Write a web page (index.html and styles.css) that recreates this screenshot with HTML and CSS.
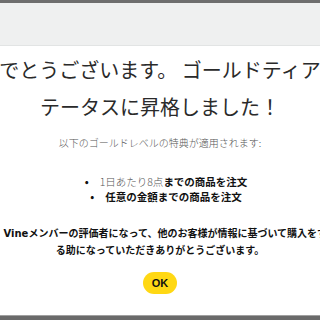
FILE: index.html
```html
<!DOCTYPE html>
<html lang="ja">
<head>
<meta charset="utf-8">
<link rel="stylesheet" href="styles.css">
</head>
<body>
<div class="frame">
  <div class="topbar"></div>
  <div class="header"></div>
  <main class="content">
    <h1 class="title">
      <span class="line">おめでとうございます。 ゴールドティアのス</span>
      <span class="line">テータスに昇格しました！</span>
    </h1>
    <p class="subtitle">以下のゴールドレベルの特典が適用されます:</p>
    <ul class="perks">
      <li><span class="light">1日あたり8点</span><b>までの商品を注文</b></li>
      <li><b>任意の金額までの商品を注文</b></li>
    </ul>
    <p class="thanks">
      <span class="line"><span class="latin">n Vine</span>メンバーの評価者になって、他のお客様が情報に基づいて購入をす</span>
      <span class="line">る助になっていただきありがとうございます。</span>
    </p>
    <button class="ok">OK</button>
  </main>
  <div class="bottombar"></div>
</div>
</body>
</html>
```

FILE: styles.css
```css
html, body {
  margin: 0;
  padding: 0;
  width: 320px;
  height: 320px;
  overflow: hidden;
  background: #ffffff;
}

.frame {
  display: flex;
  flex-direction: column;
  width: 320px;
  height: 320px;
  font-family: "Noto Sans CJK JP", "Noto Sans", sans-serif;
  color: #222;
}

.topbar {
  height: 3px;
  background: #6e6e6e;
  flex: none;
}

.header {
  height: 42px;
  flex: none;
  background: #eff0f0;
  border-bottom: 1px solid #e2e4e4;
}

.content {
  flex: 1;
  display: flex;
  flex-direction: column;
  align-items: center;
  padding-top: 5px;
  overflow: hidden;
}

.title {
  margin: 0;
  font-size: 20px;
  font-weight: 400;
  line-height: 37px;
  color: #2a2a2a;
  display: flex;
  flex-direction: column;
  align-items: center;
  width: 320px;
}

.line {
  white-space: nowrap;
}

.subtitle {
  margin: 11px 0 0;
  font-size: 10px;
  line-height: 14px;
  color: #555;
  font-weight: 300;
}

.perks {
  margin: 24px 0 0;
  padding: 0 0 0 12px;
  list-style: none;
  font-size: 10.5px;
  line-height: 15px;
  text-align: center;
  color: #111;
}

.perks li::before {
  content: "•";
  display: inline-block;
  width: 15px;
  text-align: left;
  font-weight: 700;
}

.perks .light {
  color: #555;
  font-weight: 300;
}

.perks b {
  font-weight: 700;
}

.thanks {
  margin: 21px 0 0;
  font-size: 10px;
  line-height: 16px;
  font-weight: 700;
  color: #111;
  display: flex;
  flex-direction: column;
  align-items: center;
  width: 320px;
}

.latin {
  font-family: "DejaVu Sans", "Noto Sans", sans-serif;
}

.ok {
  margin-top: 14px;
  width: 34px;
  height: 22px;
  border: none;
  border-radius: 11px;
  background: #ffd814;
  color: #111;
  font-family: "Liberation Sans", Arial, sans-serif;
  font-weight: 700;
  font-size: 11px;
  padding: 0;
  flex: none;
}

.bottombar {
  height: 4px;
  flex: none;
  background: #6a6a6a;
  border-top: 1px solid #a0a0a0;
}
```
